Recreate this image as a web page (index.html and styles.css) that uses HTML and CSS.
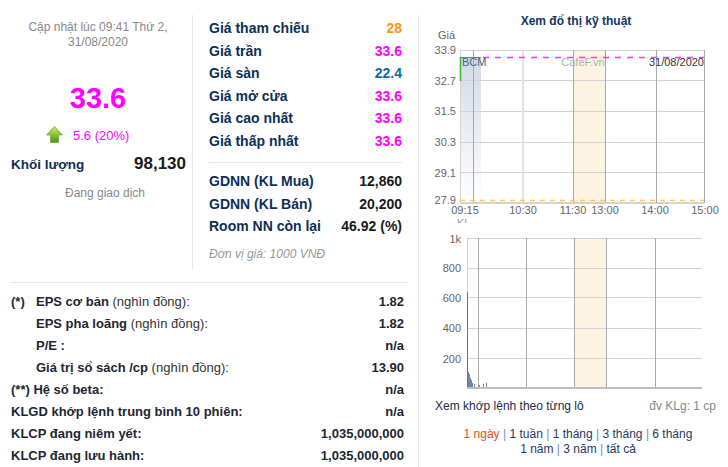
FILE: index.html
```html
<!DOCTYPE html>
<html lang="vi">
<head>
    <meta charset="UTF-8">
    <meta name="viewport" content="width=device-width, initial-scale=1.0">
    <title>BCM - Thông tin giao dịch</title>
    <link rel="stylesheet" href="styles.css">
</head>
<body>
    <div id="stock-widget">
        <div class="left-panel">
            <div class="top">
                <div class="col-price">
                    <div class="updated">Cập nhật lúc 09:41 Thứ 2, 31/08/2020</div>
                    <div class="price">33.6</div>
                    <div class="change">
                        <svg class="arrow" width="17" height="17" viewBox="0 0 17 17">
                            <defs>
                                <linearGradient id="upGreen" x1="0" y1="0" x2="0" y2="1">
                                    <stop offset="0" stop-color="#c9ef62"/>
                                    <stop offset="1" stop-color="#4f9412"/>
                                </linearGradient>
                            </defs>
                            <polygon points="8.5,0.5 16.5,9 12.5,9 12.5,16.5 4.5,16.5 4.5,9 0.5,9" fill="url(#upGreen)" stroke="#5a9a1c" stroke-width="0.6"/>
                        </svg>
                        <span>5.6 (20%)</span>
                    </div>
                    <div class="volume">
                        <span class="vol-label">Khối lượng</span>
                        <span class="vol-value">98,130</span>
                    </div>
                    <div class="status">Đang giao dịch</div>
                </div>
                <div class="col-detail">
                    <div class="drow"><span>Giá tham chiếu</span><span class="val c-ref">28</span></div>
                    <div class="drow"><span>Giá trần</span><span class="val c-ceil">33.6</span></div>
                    <div class="drow"><span>Giá sàn</span><span class="val c-floor">22.4</span></div>
                    <div class="drow"><span>Giá mở cửa</span><span class="val c-ceil">33.6</span></div>
                    <div class="drow"><span>Giá cao nhất</span><span class="val c-ceil">33.6</span></div>
                    <div class="drow"><span>Giá thấp nhất</span><span class="val c-ceil">33.6</span></div>
                    <div class="divider"></div>
                    <div class="drow"><span>GDNN (KL Mua)</span><span class="val">12,860</span></div>
                    <div class="drow"><span>GDNN (KL Bán)</span><span class="val">20,200</span></div>
                    <div class="drow"><span>Room NN còn lại</span><span class="val">46.92 (%)</span></div>
                    <div class="unit">Đơn vị giá: 1000 VNĐ</div>
                </div>
            </div>

            <div class="fin-table">
                <div class="frow"><span class="flabel"><span class="mark">(*)</span>EPS cơ bản <span class="note">(nghìn đồng):</span></span><span>1.82</span></div>
                <div class="frow"><span class="flabel"><span class="mark"></span>EPS pha loãng <span class="note">(nghìn đồng):</span></span><span>1.82</span></div>
                <div class="frow"><span class="flabel"><span class="mark"></span>P/E :</span><span>n/a</span></div>
                <div class="frow"><span class="flabel"><span class="mark"></span>Giá trị sổ sách /cp <span class="note">(nghìn đồng):</span></span><span>13.90</span></div>
                <div class="frow"><span class="flabel">(**) Hệ số beta:</span><span>n/a</span></div>
                <div class="frow"><span class="flabel">KLGD khớp lệnh trung bình 10 phiên:</span><span>n/a</span></div>
                <div class="frow"><span class="flabel">KLCP đang niêm yết:</span><span>1,035,000,000</span></div>
                <div class="frow"><span class="flabel">KLCP đang lưu hành:</span><span>1,035,000,000</span></div>
            </div>
        </div>

        <div class="chart-panel">
            <div class="chart-title">Xem đổ thị kỹ thuật</div>
            <svg class="charts" width="309" height="365" viewBox="0 0 309 365">
                <defs>
                    <linearGradient id="preOpen" x1="0" y1="0" x2="0" y2="1">
                        <stop offset="0" stop-color="#d3dae5"/>
                        <stop offset="1" stop-color="#ffffff"/>
                    </linearGradient>
                </defs>

                <!-- price chart -->
                <text x="19" y="10" class="ax">Giá</text>
                <rect x="41" y="28" width="21" height="146" fill="url(#preOpen)"/>
                <rect x="154" y="21" width="32" height="153" fill="#fdf3e2"/>
                <g stroke="#d2d2d2" stroke-width="1">
                    <line x1="41" y1="21.5" x2="285" y2="21.5"/>
                    <line x1="41" y1="51.5" x2="285" y2="51.5"/>
                    <line x1="41" y1="82.5" x2="285" y2="82.5"/>
                    <line x1="41" y1="113.5" x2="285" y2="113.5"/>
                    <line x1="41" y1="143.5" x2="285" y2="143.5"/>
                    <line x1="41.5" y1="21" x2="41.5" y2="174"/>
                </g>
                <line x1="104" y1="21" x2="104" y2="174" stroke="#e2e2e2" stroke-width="2"/>
                <g stroke="#a8a8a8" stroke-width="1">
                    <line x1="54.5" y1="21" x2="54.5" y2="174"/>
                    <line x1="154.5" y1="21" x2="154.5" y2="174"/>
                    <line x1="186.5" y1="21" x2="186.5" y2="174"/>
                    <line x1="237.5" y1="21" x2="237.5" y2="174"/>
                    <line x1="285.5" y1="21" x2="285.5" y2="174"/>
                </g>
                <line x1="41" y1="174" x2="285" y2="174" stroke="#c4c4c4" stroke-width="1.5"/>
                <line x1="41" y1="171.5" x2="285" y2="171.5" stroke="#ffc766" stroke-width="1.5" stroke-dasharray="5,5"/>
                <line x1="41.5" y1="28" x2="41.5" y2="52" stroke="#3fb23f" stroke-width="1.5"/>
                <line x1="41" y1="28.5" x2="62" y2="28.5" stroke="#5c9a5c" stroke-width="1"/>
                <path d="M64 28.5 H285" fill="none" stroke="#ff33ff" stroke-width="1.5" stroke-dasharray="6 6"/>
                <text x="43" y="37" class="lbl bcm">BCM</text>
                <text x="164" y="37" class="lbl brand" text-anchor="middle">CafeF.vn</text>
                <text x="285" y="37" class="lbl date" text-anchor="end">31/08/2020</text>

                <g class="ax" text-anchor="end">
                    <text x="37" y="25">33.9</text>
                    <text x="37" y="56">32.7</text>
                    <text x="37" y="86">31.5</text>
                    <text x="37" y="117">30.3</text>
                    <text x="37" y="148">29.1</text>
                    <text x="37" y="175">27.9</text>
                </g>
                <g class="ax" text-anchor="middle">
                    <text x="46" y="185">09:15</text>
                    <text x="104" y="185">10:30</text>
                    <text x="154" y="185">11:30</text>
                    <text x="186" y="185">13:00</text>
                    <text x="236" y="185">14:00</text>
                    <text x="286" y="185">15:00</text>
                </g>
                <text x="38" y="198" class="ax faint">KL</text>
                <rect x="30" y="194" width="40" height="12" fill="#fff"/>

                <!-- volume chart -->
                <rect x="155" y="209" width="32" height="150" fill="#fdf3e2"/>
                <g stroke="#d2d2d2" stroke-width="1">
                    <line x1="48" y1="209.5" x2="283" y2="209.5"/>
                    <line x1="48" y1="239.5" x2="283" y2="239.5"/>
                    <line x1="48" y1="268.5" x2="283" y2="268.5"/>
                    <line x1="48" y1="299.5" x2="283" y2="299.5"/>
                    <line x1="48" y1="329.5" x2="283" y2="329.5"/>
                    <line x1="48.5" y1="209" x2="48.5" y2="359"/>
                </g>
                <g stroke="#a8a8a8" stroke-width="1">
                    <line x1="59.5" y1="209" x2="59.5" y2="359"/>
                    <line x1="107.5" y1="209" x2="107.5" y2="359"/>
                    <line x1="155.5" y1="209" x2="155.5" y2="359"/>
                    <line x1="187.5" y1="209" x2="187.5" y2="359"/>
                    <line x1="236.5" y1="209" x2="236.5" y2="359"/>
                </g>
                <line x1="48.5" y1="263" x2="48.5" y2="359" stroke="#5b78a8" stroke-width="1"/>
                <g fill="#7185ab">
                    <rect x="49" y="343" width="1" height="16"/>
                    <rect x="50" y="345" width="1" height="14"/>
                    <rect x="51" y="349" width="1" height="10"/>
                    <rect x="52" y="351" width="1" height="8"/>
                    <rect x="53" y="354" width="1" height="5"/>
                    <rect x="55" y="355" width="1" height="4"/>
                    <rect x="60" y="356" width="1" height="3"/>
                    <rect x="64" y="355" width="1" height="4"/>
                    <rect x="67" y="354" width="1" height="5"/>
                </g>
                <line x1="48" y1="359" x2="283" y2="359" stroke="#bdbdbd" stroke-width="2"/>
                <g class="ax" text-anchor="end">
                    <text x="42" y="214">1k</text>
                    <text x="42" y="243">800</text>
                    <text x="42" y="273">600</text>
                    <text x="42" y="303">400</text>
                    <text x="42" y="334">200</text>
                </g>
            </svg>
            <div class="chart-foot">
                <span class="lot-link">Xem khớp lệnh theo từng lô</span>
                <span class="unit-vol">đv KLg: 1 cp</span>
            </div>
            <div class="periods">
                <a class="active">1 ngày</a> <i>|</i> <a>1 tuần</a> <i>|</i> <a>1 tháng</a> <i>|</i> <a>3 tháng</a> <i>|</i> <a>6 tháng</a><br>
                <a>1 năm</a> <i>|</i> <a>3 năm</a> <i>|</i> <a>tất cả</a>
            </div>
        </div>
    </div>
</body>
</html>
```

FILE: styles.css
```css
/* BCM quote box */
* {
    box-sizing: border-box;
    margin: 0;
    padding: 0;
}
body {
    background: #fff;
}
#stock-widget {
    font-family: "Liberation Sans", Arial, sans-serif;
    display: flex;
    width: 728px;
    height: 467px;
    color: #222;
    overflow: hidden;
}

/* left side */
#stock-widget .left-panel {
    width: 419px;
    margin-top: 15px;
    border-right: 1px solid #e6e6e6;
}
#stock-widget .top {
    display: flex;
    height: 255px;
}
#stock-widget .col-price {
    width: 193px;
    padding: 4.5px 6px 0 10px;
    border-right: 1px solid #e8e8e8;
}
#stock-widget .updated {
    font-size: 12px;
    line-height: 15px;
    color: #888;
    text-align: center;
}
#stock-widget .price {
    margin-top: 32.5px;
    font-size: 29px;
    line-height: 32px;
    font-weight: bold;
    color: #ff00ff;
    text-align: center;
}
#stock-widget .change {
    display: flex;
    align-items: center;
    gap: 10px;
    height: 18px;
    margin-top: 12px;
    padding-left: 36px;
    font-size: 13px;
    color: #ff00ff;
}
#stock-widget .arrow {
    display: block;
    margin-top: -2px;
}
#stock-widget .volume {
    display: flex;
    justify-content: space-between;
    align-items: center;
    height: 20px;
    margin-top: 10px;
    padding-left: 1px;
}
#stock-widget .vol-label {
    font-size: 13.5px;
    font-weight: bold;
    color: #0d2f57;
}
#stock-widget .vol-value {
    font-size: 17px;
    font-weight: bold;
    color: #1a1a1a;
}
#stock-widget .status {
    margin-top: 11.5px;
    font-size: 12px;
    line-height: 15px;
    color: #888;
    text-align: center;
    padding-left: 14px;
}

#stock-widget .col-detail {
    flex: 1;
    padding: 1.75px 16px 0 16px;
}
#stock-widget .drow {
    display: flex;
    justify-content: space-between;
    align-items: center;
    height: 22.5px;
    font-size: 14px;
    font-weight: bold;
    color: #0d2f57;
}
#stock-widget .drow .val { color: #1a1a1a; }
#stock-widget .drow .c-ref { color: #f7941d; }
#stock-widget .drow .c-ceil { color: #ff00ff; }
#stock-widget .drow .c-floor { color: #0b69a3; }
#stock-widget .divider {
    height: 1px;
    margin: 10px 0 7px;
    background: #e6e6e6;
}
#stock-widget .unit {
    margin-top: 10px;
    font-size: 12px;
    line-height: 15px;
    font-style: italic;
    color: #999;
}

#stock-widget .fin-table {
    margin: 12px 10px 0;
    padding-top: 8px;
    border-top: 1px solid #e6e6e6;
}
#stock-widget .frow {
    display: flex;
    justify-content: space-between;
    align-items: center;
    height: 21.9px;
    padding: 0 4px 0 1px;
    font-size: 13px;
    font-weight: bold;
    color: #1d2733;
}
#stock-widget .mark {
    display: inline-block;
    width: 25px;
}
#stock-widget .note {
    font-weight: normal;
    color: #333;
}

/* chart side */
#stock-widget .chart-panel {
    width: 309px;
}
#stock-widget .chart-title {
    padding: 14px 0 0 5px;
    font-size: 12px;
    line-height: 15px;
    font-weight: bold;
    color: #0c3766;
    text-align: center;
}
#stock-widget .charts {
    display: block;
}
#stock-widget .charts text {
    font-family: "Liberation Sans", Arial, sans-serif;
}
#stock-widget .ax {
    font-size: 11px;
    fill: #666;
}
#stock-widget .faint {
    fill: #999;
}
#stock-widget .lbl {
    font-size: 11px;
}
#stock-widget .bcm { fill: #4c6282; }
#stock-widget .brand { fill: #b0b0b0; }
#stock-widget .date { fill: #333; }

#stock-widget .chart-foot {
    display: flex;
    justify-content: space-between;
    margin-top: 4.5px;
    padding: 0 12px 0 16px;
    font-size: 12px;
    line-height: 15px;
}
#stock-widget .lot-link {
    color: #1b2c48;
}
#stock-widget .unit-vol {
    color: #888;
}
#stock-widget .periods {
    margin-top: 13px;
    padding-left: 9px;
    font-size: 12px;
    line-height: 15px;
    text-align: center;
    color: #1b3a66;
}
#stock-widget .periods a {
    color: #1b3a66;
    cursor: pointer;
}
#stock-widget .periods a.active {
    color: #e0501a;
}
#stock-widget .periods i {
    font-style: normal;
    color: #6a8fbf;
}
```
